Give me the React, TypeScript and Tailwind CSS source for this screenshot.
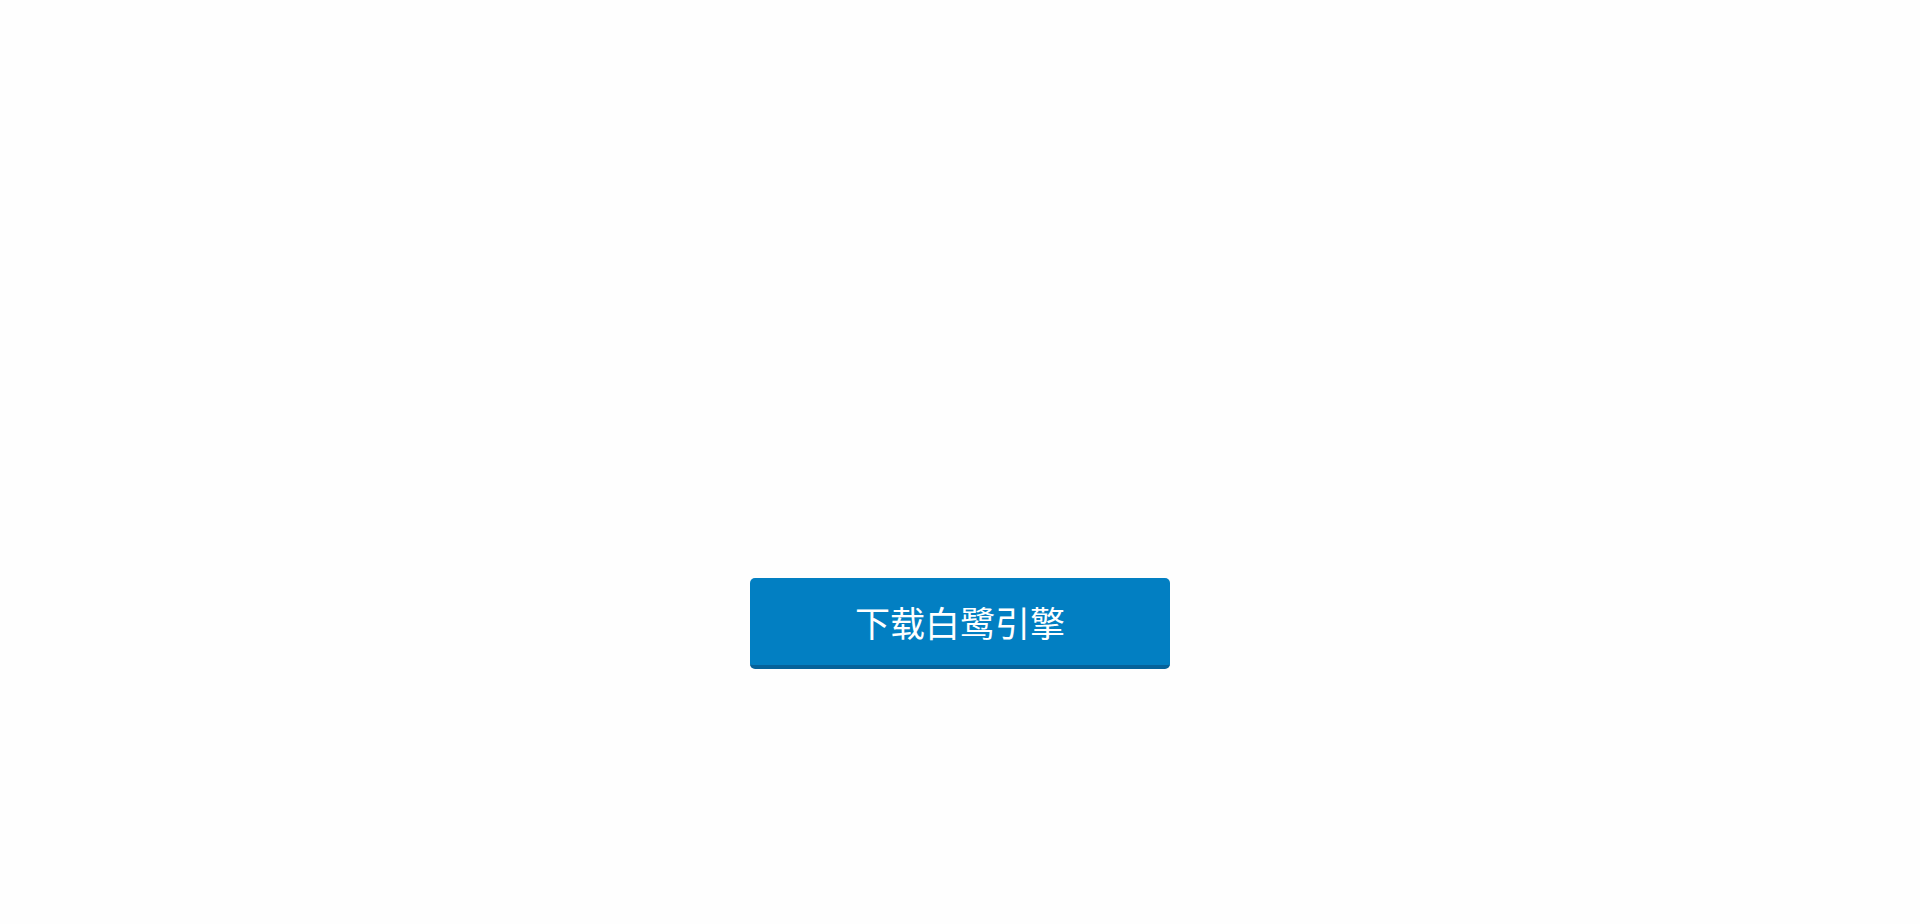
export default function App() {
  return (
    <div className="w-full h-[924px] bg-[#fefefe] flex justify-center pt-[578px]">
      <button
        type="button"
        className="w-[420px] h-[91px] rounded-[5px] bg-[#027fc2] border-b-4 border-[#05629a] flex items-center justify-center text-white text-[35px] leading-none tracking-normal"
        style={{ fontFamily: '"Noto Sans CJK SC", "Noto Sans", sans-serif' }}
      >
        下载白鹭引擎
      </button>
    </div>
  );
}
